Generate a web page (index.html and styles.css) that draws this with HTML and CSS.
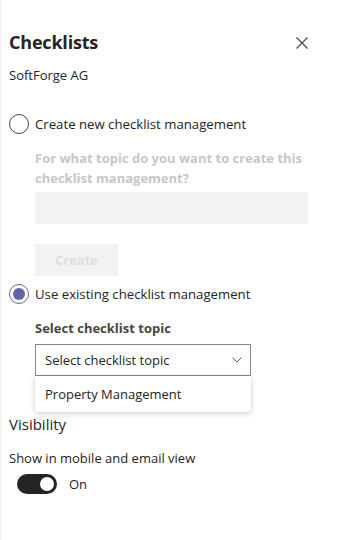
FILE: index.html
```html
<!DOCTYPE html>
<html>
<head>
<meta charset="utf-8">
<link rel="stylesheet" href="styles.css">
</head>
<body>
<div class="panel">
  <div class="header">
    <h1 class="title">Checklists</h1>
    <svg class="close" width="12" height="12" viewBox="0 0 12 12"><path d="M0.5 0.5 L11.5 11.5 M11.5 0.5 L0.5 11.5" stroke="#484644" stroke-width="1.1" fill="none"/></svg>
  </div>
  <div class="company">SoftForge AG</div>

  <div class="radio-row">
    <span class="radio"></span>
    <span class="radio-label">Create new checklist management</span>
  </div>
  <div class="indent">
    <div class="field-label disabled">For what topic do you want to create this checklist management?</div>
    <div class="input disabled-input"></div>
    <div class="btn-disabled">Create</div>
  </div>

  <div class="radio-row second">
    <span class="radio checked"><span class="dot"></span></span>
    <span class="radio-label">Use existing checklist management</span>
  </div>
  <div class="indent">
    <div class="field-label">Select checklist topic</div>
    <div class="dropdown-wrap">
      <div class="dropdown">
        <span>Select checklist topic</span>
        <svg class="chev" width="10" height="6" viewBox="0 0 10 6"><path d="M0.5 0.5 L5 5 L9.5 0.5" stroke="#605e5c" stroke-width="1" fill="none"/></svg>
      </div>
      <div class="menu">
        <div class="menu-item">Property Management</div>
      </div>
    </div>
  </div>

  <div class="section-title">Visibility</div>
  <div class="small">Show in mobile and email view</div>
  <div class="toggle-row">
    <span class="toggle"><span class="knob"></span></span>
    <span class="toggle-label">On</span>
  </div>
</div>
</body>
</html>
```
FILE: styles.css
```css
* { box-sizing: border-box; }
html, body { margin: 0; padding: 0; background: #fff; }
body {
  font-family: "Open Sans", "Noto Sans", sans-serif;
  color: #252423;
  font-size: 13px;
}
.panel {
  width: 340px;
  height: 540px;
  padding: 28px 0 0 7px;
  border-left: 2px solid #f3f3f3;
}
.header {
  display: flex;
  align-items: center;
  justify-content: space-between;
  width: 299px;
  height: 28px;
}
.title {
  margin: 0;
  font-size: 18px;
  font-weight: 700;
  color: #252423;
  letter-spacing: -0.2px;
}
.close { margin-top: 2px; }
.company { margin-top: 9px; line-height: 20px; }
.radio-row {
  display: flex;
  align-items: center;
  gap: 6px;
  margin-top: 29px;
  height: 20px;
}
.radio-row.second { margin-top: 8px; }
.radio {
  width: 20px; height: 20px;
  border: 1px solid #484644;
  border-radius: 50%;
  display: flex; align-items: center; justify-content: center;
  flex: none;
}
.radio.checked { border-color: #6264a7; }
.dot { width: 12px; height: 12px; border-radius: 50%; background: #6264a7; }
.radio-label { color: #252423; font-size: 13.2px; }
.indent { padding-left: 26px; }
.field-label {
  font-weight: 700;
  color: #484644;
  line-height: 20px;
  margin-top: 14px;
}
.field-label.disabled { color: #c8c6c4; margin-top: 14px; width: 270px; }
.input {
  width: 273px; height: 32px;
  background: #f3f2f1;
  margin-top: 4px;
}
.btn-disabled {
  width: 83px; height: 32px;
  background: #f3f2f1;
  color: #e1dfdd;
  font-weight: 700;
  display: flex; align-items: center; justify-content: center;
  margin-top: 20px;
}
.dropdown-wrap { position: relative; margin-top: 6px; width: 216px; }
.dropdown {
  height: 32px;
  border: 1px solid #8a8886;
  display: flex; align-items: center; justify-content: space-between;
  padding: 0 8px 0 9px;
  color: #252423;
}
.menu {
  position: absolute;
  left: 0; top: 32px;
  width: 216px;
  background: #fff;
  box-shadow: 0 2px 6px rgba(0,0,0,0.16), 0 0 2px rgba(0,0,0,0.08);
  border-radius: 0 0 3px 3px;
  padding: 4px 0;
}
.menu-item {
  height: 28px;
  line-height: 28px;
  padding-left: 10px;
  color: #252423;
}
.section-title {
  margin-top: 38px;
  font-size: 15px;
  line-height: 20px;
}
.small { margin-top: 15px; font-size: 13px; line-height: 18px; }
.toggle-row {
  display: flex; align-items: center; gap: 12px;
  margin-top: 7px; padding-left: 8px;
}
.toggle {
  width: 40px; height: 20px;
  background: #252423;
  border-radius: 10px;
  display: flex; align-items: center; justify-content: flex-end;
  padding-right: 3px;
}
.knob { width: 14px; height: 14px; border-radius: 50%; background: #fff; }
.toggle-label { font-size: 13px; }
```
